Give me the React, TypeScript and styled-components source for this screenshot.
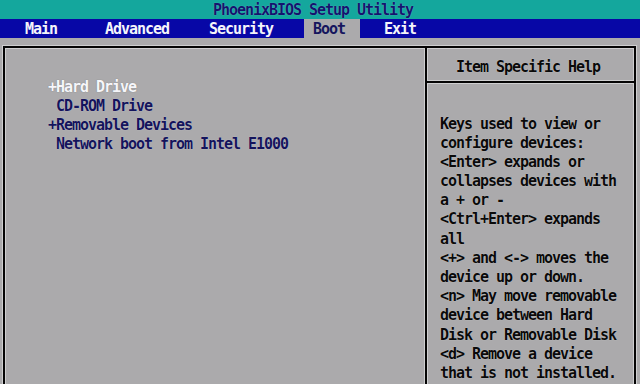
import React from "react";
import styled, { createGlobalStyle } from "styled-components";

const ROW = 19.2;

const Global = createGlobalStyle`
  html, body { margin: 0; padding: 0; background: #abaaac; }
  body { width: 640px; height: 384px; overflow: hidden; }
`;

const Screen = styled.div`
  width: 640px;
  height: 384px;
  overflow: hidden;
  display: flex;
  flex-direction: column;
  background: #abaaac;
  font-family: "DejaVu Sans Mono", "Liberation Mono", monospace;
  font-weight: bold;
  font-size: 15px;
  letter-spacing: -1.03px;
  line-height: ${ROW}px;
  white-space: pre;
`;

const TitleBar = styled.div`
  height: ${ROW}px;
  box-sizing: border-box;
  padding: 1px 0 0 213px;
  line-height: 18px;
  background: #14a79d;
  color: #14146e;
  text-shadow: 0 0 1px rgba(180, 240, 235, 0.6);
`;

const MenuBar = styled.div`
  height: ${ROW}px;
  background: #0707a6;
  display: flex;
  padding-left: 16px;
`;

const MenuItem = styled.div<{ $w: number; $pl?: number; $active?: boolean }>`
  width: ${(p) => p.$w}px;
  padding-left: ${(p) => p.$pl ?? 9}px;
  padding-top: 1px;
  line-height: 18px;
  box-sizing: border-box;
  color: ${(p) => (p.$active ? "#15155e" : "#f4f4fa")};
  background: ${(p) => (p.$active ? "#abaaac" : "transparent")};
`;

const Body = styled.div`
  flex: 1;
  padding: 8px 0 0 3px;
`;

const Frame = styled.div`
  width: 633px;
  height: 340px;
  box-sizing: border-box;
  border: 2px solid #050505;
  border-bottom: none;
  box-shadow: 0 0 0 1px #cfcfd0, inset 0 0 0 1px #cfcfd0;
  display: grid;
  grid-template-columns: 422px 1fr;
`;

const MainPanel = styled.div`
  border-right: 2px solid #050505;
  box-shadow: 1px 0 0 #cfcfd0, inset -1px 0 0 #cfcfd0;
  padding: ${ROW * 1.5 + 1}px 0 0 43px;
`;

const BootItem = styled.div<{ $selected?: boolean }>`
  height: ${ROW}px;
  color: ${(p) => (p.$selected ? "#f6f6fa" : "#14145c")};
  text-shadow: ${(p) =>
    p.$selected ? "0 0 1px rgba(60,60,60,0.5)" : "0 0 1px rgba(230,230,240,0.7)"};
`;

const HelpPanel = styled.div`
  display: flex;
  flex-direction: column;
`;

const HelpHeader = styled.div`
  height: 35px;
  padding: 10px 0 0 29px;
  box-sizing: border-box;
  border-bottom: 2px solid #050505;
  box-shadow: 0 1px 0 #cfcfd0, inset 0 -1px 0 #cfcfd0;
  color: #0a0a0a;
  text-shadow: 0 0 1px rgba(240, 240, 240, 0.7);
`;

const HelpBody = styled.div`
  padding: 31.5px 0 0 13px;
  color: #0a0a0a;
  text-shadow: 0 0 1px rgba(240, 240, 240, 0.7);
`;

const HelpLine = styled.div`
  height: ${ROW}px;
`;

const menu = [
  { label: "Main", w: 80 },
  { label: "Advanced", w: 104 },
  { label: "Security", w: 104 },
  { label: "Boot", w: 56, active: true },
  { label: "Exit", w: 80, pl: 24 },
];

const bootItems = [
  { text: "+Hard Drive", selected: true },
  { text: " CD-ROM Drive" },
  { text: "+Removable Devices" },
  { text: " Network boot from Intel E1000" },
];

const help = [
  "Keys used to view or",
  "configure devices:",
  "<Enter> expands or",
  "collapses devices with",
  "a + or -",
  "<Ctrl+Enter> expands",
  "all",
  "<+> and <-> moves the",
  "device up or down.",
  "<n> May move removable",
  "device between Hard",
  "Disk or Removable Disk",
  "<d> Remove a device",
  "that is not installed.",
];

export default function App() {
  return (
    <Screen>
      <Global />
      <TitleBar>PhoenixBIOS Setup Utility</TitleBar>
      <MenuBar>
        {menu.map((m) => (
          <MenuItem key={m.label} $w={m.w} $pl={m.pl} $active={m.active}>
            {m.label}
          </MenuItem>
        ))}
      </MenuBar>
      <Body>
        <Frame>
          <MainPanel>
            {bootItems.map((b) => (
              <BootItem key={b.text} $selected={b.selected}>
                {b.text}
              </BootItem>
            ))}
          </MainPanel>
          <HelpPanel>
            <HelpHeader>Item Specific Help</HelpHeader>
            <HelpBody>
              {help.map((l) => (
                <HelpLine key={l}>{l}</HelpLine>
              ))}
            </HelpBody>
          </HelpPanel>
        </Frame>
      </Body>
    </Screen>
  );
}
